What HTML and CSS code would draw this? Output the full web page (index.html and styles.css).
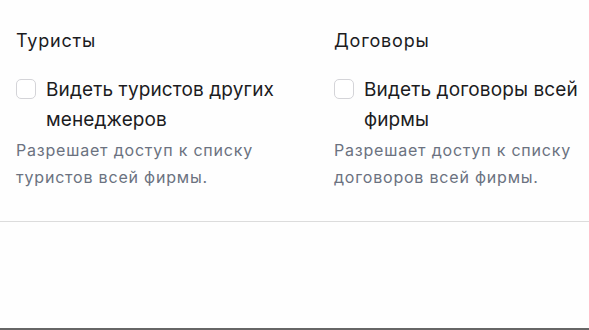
FILE: index.html
```html
<!DOCTYPE html>
<html lang="ru">
<head>
<meta charset="utf-8">
<link rel="stylesheet" href="styles.css">
</head>
<body>
<div class="page">
  <div class="grid">
    <section class="group">
      <h3 class="group-title">Туристы</h3>
      <label class="check">
        <span class="box"></span>
        <span class="check-label">Видеть туристов других менеджеров</span>
      </label>
      <p class="hint">Разрешает доступ к списку туристов всей фирмы.</p>
    </section>
    <section class="group">
      <h3 class="group-title">Договоры</h3>
      <label class="check">
        <span class="box"></span>
        <span class="check-label">Видеть договоры всей фирмы</span>
      </label>
      <p class="hint">Разрешает доступ к списку договоров всей фирмы.</p>
    </section>
  </div>
  <div class="divider"></div>
  <div class="spacer"></div>
  <div class="bottom-line"></div>
</div>
</body>
</html>
```
FILE: styles.css
```css
html, body {
  margin: 0;
  padding: 0;
  background: #fefefe;
}
body {
  font-family: Inter, "Noto Sans", sans-serif;
  color: #1c1c1e;
  overflow: hidden;
}
.page {
  width: 589px;
  height: 330px;
  display: flex;
  flex-direction: column;
}
.grid {
  display: grid;
  grid-template-columns: 270px 270px;
  column-gap: 48px;
  padding: 28px 16px 0;
  height: 192px;
  box-sizing: border-box;
}
.group-title {
  margin: 0;
  font-size: 18px;
  font-weight: 400;
  line-height: 26px;
  letter-spacing: 0.8px;
}
.check {
  display: flex;
  align-items: flex-start;
  gap: 10px;
  margin-top: 27px;
}
.box {
  flex: none;
  width: 18px;
  height: 18px;
  border: 1px solid #d4d4d8;
  border-radius: 5px;
  background: #fff;
  margin-top: -2px;
}
.check-label {
  font-size: 19px;
  line-height: 30px;
  letter-spacing: 0.12px;
  margin-top: -6px;
  width: 240px;
}
.hint {
  margin: 2px 0 0;
  font-size: 16px;
  line-height: 27px;
  letter-spacing: 0.8px;
  color: #6b7280;
}
.divider {
  height: 1px;
  background: #dcdcdc;
  margin-top: 29px;
}
.spacer {
  flex: 1;
}
.bottom-line {
  height: 2px;
  background: #666;
}
```
